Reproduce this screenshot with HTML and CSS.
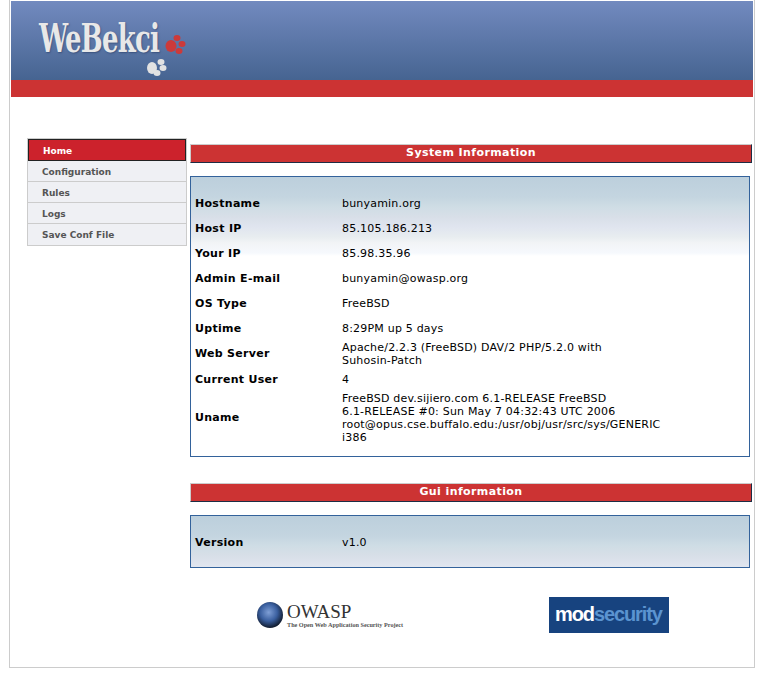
FILE: index.html
```html
<!DOCTYPE html>
<html>
	<head>
		<title>WeBekci</title>
		<meta name="viewport" content="width=device-width, initial-scale=1" />
		<link rel="stylesheet" href="styles.css">
	</head>
	<body>
		<div class="Page">
			<div class="Header">
				<div class="Logo">
					<span class="LogoText">WeBekci</span>
					<svg class="Paws" width="60" height="60" viewBox="0 0 60 60">
						<g fill="#cc3a3a">
							<ellipse cx="24" cy="20" rx="5.5" ry="6" />
							<ellipse cx="30" cy="12" rx="3.5" ry="3" />
							<ellipse cx="35" cy="18" rx="3.5" ry="3" />
							<ellipse cx="32" cy="25" rx="3.5" ry="3" />
						</g>
						<g fill="#e2e2e2">
							<ellipse cx="5" cy="42" rx="5" ry="6" />
							<ellipse cx="14" cy="36" rx="3.5" ry="3" />
							<ellipse cx="16" cy="42" rx="3.5" ry="3" />
							<ellipse cx="10" cy="47" rx="3.5" ry="3" />
						</g>
					</svg>
				</div>
			</div>
			<div class="RedBar"></div>
			<div class="Main">
				<div class="Menu">
					<a class="MenuItem Active">Home</a>
					<a class="MenuItem">Configuration</a>
					<a class="MenuItem">Rules</a>
					<a class="MenuItem">Logs</a>
					<a class="MenuItem">Save Conf File</a>
				</div>
				<div class="Content">
					<div class="SectionTitle">System Information</div>
					<div class="Panel">
						<div class="Row"><span class="Key">Hostname</span><span class="Value">bunyamin.org</span></div>
						<div class="Row"><span class="Key">Host IP</span><span class="Value">85.105.186.213</span></div>
						<div class="Row"><span class="Key">Your IP</span><span class="Value">85.98.35.96</span></div>
						<div class="Row"><span class="Key">Admin E-mail</span><span class="Value">bunyamin@owasp.org</span></div>
						<div class="Row"><span class="Key">OS Type</span><span class="Value">FreeBSD</span></div>
						<div class="Row"><span class="Key">Uptime</span><span class="Value">8:29PM up 5 days</span></div>
						<div class="Row"><span class="Key">Web Server</span><span class="Value"><span class="Line">Apache/2.2.3 (FreeBSD) DAV/2 PHP/5.2.0 with</span><span class="Line">Suhosin-Patch</span></span></div>
						<div class="Row"><span class="Key">Current User</span><span class="Value">4</span></div>
						<div class="Row"><span class="Key">Uname</span><span class="Value"><span class="Line">FreeBSD dev.sijiero.com 6.1-RELEASE FreeBSD</span><span class="Line">6.1-RELEASE #0: Sun May 7 04:32:43 UTC 2006</span><span class="Line">root@opus.cse.buffalo.edu:/usr/obj/usr/src/sys/GENERIC</span><span class="Line">i386</span></span></div>
					</div>
					<div class="SectionTitle Second">Gui information</div>
					<div class="Panel Short">
						<div class="Row"><span class="Key">Version</span><span class="Value">v1.0</span></div>
					</div>
					<div class="Logos">
						<div class="Owasp">
							<svg width="26" height="26" viewBox="0 0 26 26">
								<defs>
									<radialGradient id="Globe" cx="0.45" cy="0.4" r="0.6">
										<stop offset="0" stop-color="#7f9fd6" />
										<stop offset="0.55" stop-color="#3a5f9f" />
										<stop offset="1" stop-color="#101a2c" />
									</radialGradient>
								</defs>
								<circle cx="13" cy="13" r="13" fill="url(#Globe)" />
							</svg>
							<div class="OwaspText">
								<div class="OwaspName">OWASP</div>
								<div class="OwaspTag">The Open Web Application Security Project</div>
							</div>
						</div>
						<div class="ModSec"><span class="Mod">mod</span><span class="Sec">security</span></div>
					</div>
				</div>
			</div>
		</div>
	</body>
</html>
```

FILE: styles.css
```css
:root
{
	--red: #cc3333;
	--grey: #cccccc;
	--panelBorder: #33629b;
}

html
{
	font-family: "DejaVu Sans", Verdana, sans-serif;
	font-size: 11px;
	color: #000;
	background: #fff;
}

body
{
	margin: 0;
}

.Page
{
	box-sizing: border-box;
	width: 746px;
	height: 668px;
	margin-left: 9px;
	padding: 1px 1px 0 1px;
	border: 1px solid var(--grey);
	border-top: none;
}

.Header
{
	height: 79px;
	background: linear-gradient(#728abf, #466491);
	padding: 14px 0 0 28px;
	box-sizing: border-box;
}

.Logo
{
	position: relative;
	width: 120px;
}

.LogoText
{
	display: block;
	font-family: "DejaVu Serif Condensed", "DejaVu Serif", serif;
	font-weight: bold;
	font-size: 40px;
	line-height: 46px;
	letter-spacing: -1px;
	white-space: nowrap;
	color: #e8e8e8;
	text-shadow: 1px 1px 2px rgba(40,60,100,0.6);
	/* the real logo is a tall narrow face */
	transform: scaleX(0.72);
	transform-origin: left center;
}

/* the paws hang off the end of the word */
.Paws
{
	position: absolute;
	left: 108px;
	top: 11px;
}

.RedBar
{
	height: 17px;
	background: var(--red);
}

.Main
{
	display: flex;
	align-items: flex-start;
	padding: 41px 0 0 16px;
}

.Menu
{
	box-sizing: border-box;
	flex: none;
	width: 160px;
	border: 1px solid var(--grey);
	background: #eff0f4;
}

.MenuItem
{
	display: block;
	height: 21px;
	box-sizing: border-box;
	padding: 1px 0 0 14px;
	line-height: 20px;
	font-size: 9px;
	font-weight: bold;
	color: #555;
	border-bottom: 1px solid var(--grey);
}

.MenuItem:last-child
{
	border-bottom: none;
}

.MenuItem.Active
{
	height: 22px;
	background: #cc222c;
	color: #fff;
	border: 1px solid #222;
}

.Content
{
	flex: none;
	width: 562px;
	margin-left: 3px;
	padding-top: 6px;
}

.SectionTitle
{
	box-sizing: border-box;
	height: 19px;
	background: var(--red);
	border: 1px solid #1d2d44;
	border-top-color: var(--grey);
	border-left-color: var(--grey);
	color: #fff;
	font-weight: bold;
	line-height: 15px;
	letter-spacing: 0.4px;
	text-align: center;
}

.SectionTitle.Second
{
	margin-top: 26px;
}

.Panel
{
	box-sizing: border-box;
	width: 560px;
	margin-top: 13px;
	padding: 14px 0 12px 4px;
	border: 1px solid var(--panelBorder);
	background: linear-gradient(#bccfdc, #c4d5e0 20px, #cfdde5 30px, #d8dfe8 40px, #e0e5ef 50px, #e8edf0 60px, #f2f4f6 66px, #f6f9fd 76px, #fff 79px);
}

.Row
{
	display: flex;
	align-items: center;
	min-height: 25px;
}

.Key
{
	flex: none;
	width: 147px;
	line-height: 14px;
	font-weight: bold;
	letter-spacing: 0.3px;
}

.Value
{
	width: 332px;
	line-height: 13px;
	letter-spacing: 0.2px;
}

.Line
{
	display: block;
}

.Logos
{
	display: flex;
	align-items: center;
	justify-content: space-between;
	width: 412px;
	margin: 29px 0 0 67px;
}

.Owasp
{
	display: flex;
	align-items: center;
	gap: 4px;
}

.OwaspName
{
	font-family: "Liberation Serif", serif;
	font-size: 19px;
	line-height: 19px;
	color: #333;
}

.OwaspTag
{
	font-family: "Liberation Serif", serif;
	font-weight: bold;
	font-size: 6.2px;
	line-height: 7px;
	color: #555;
	white-space: nowrap;
}

.ModSec
{
	box-sizing: border-box;
	width: 120px;
	height: 36px;
	background: #17437f;
	padding-left: 6px;
	font-family: "Liberation Sans", sans-serif;
	font-weight: bold;
	font-size: 20px;
	line-height: 35px;
	letter-spacing: -1.1px;
	white-space: nowrap;
}

.Mod
{
	color: #fff;
}

.Sec
{
	color: #5b94d0;
}
```
